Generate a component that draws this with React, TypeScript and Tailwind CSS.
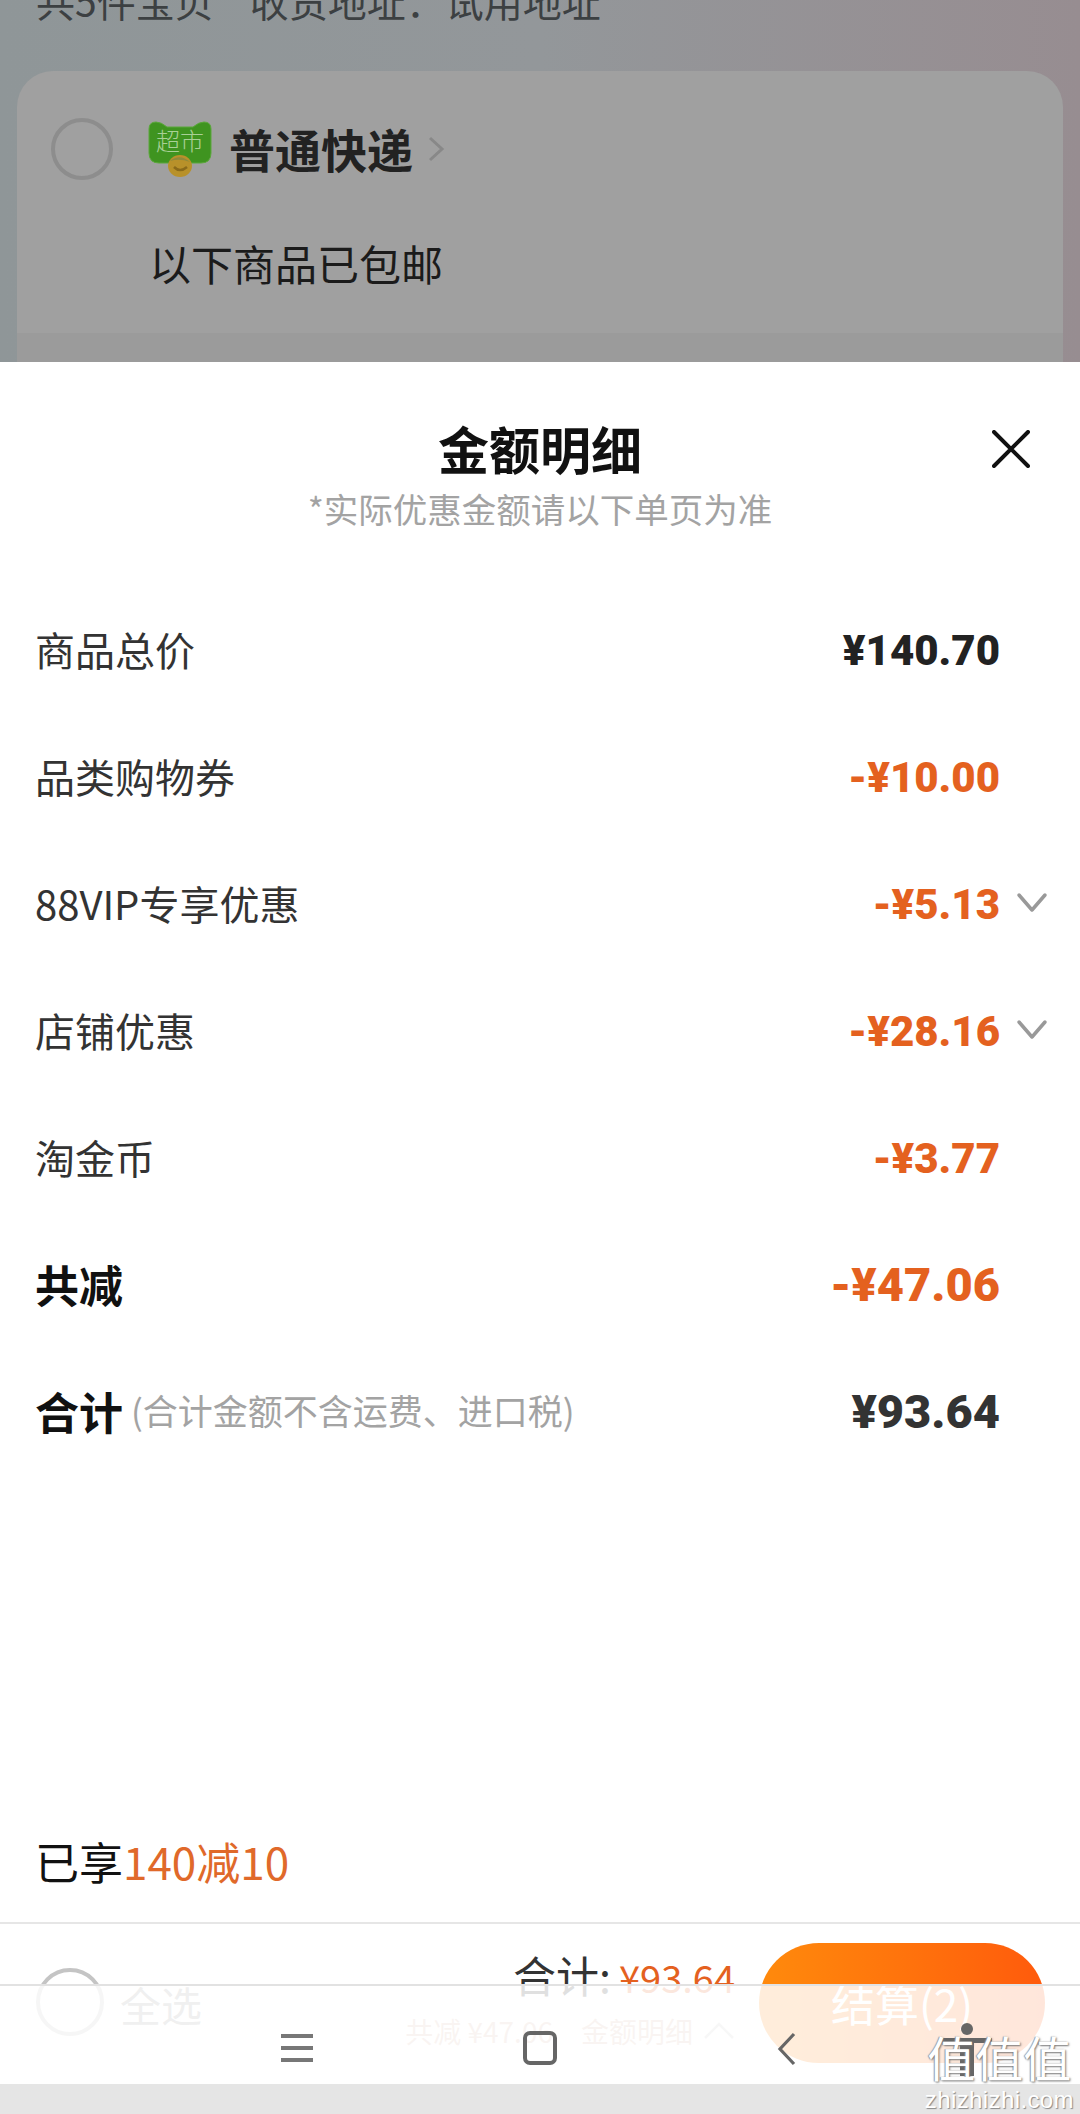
const sans = "font-['Noto_Sans_CJK_SC','Noto_Sans',sans-serif]";

function Row({ label, value, orange, chevron, bold }: { label: React.ReactNode; value: string; orange?: boolean; chevron?: boolean; bold?: boolean }) {
  return (
    <div className="flex items-center h-[127px] pl-[35px]">
      <div className={bold ? "flex-1 text-[44px] font-bold text-[#111]" : "flex-1 text-[40px] text-[#333]"}>{label}</div>
      <div className={"pt-[3px] font-['Roboto'] font-black text-right " + (bold ? "text-[47px] " : "text-[42px] ") + (orange ? "text-[#e4611f]" : bold ? "text-[#333]" : "text-[#222]")}>{value}</div>
      <div className="w-[80px] pl-[16px] flex">
        {chevron && (
          <svg width="32" height="22" viewBox="0 0 32 22" fill="none" stroke="#999" strokeWidth="3.5" strokeLinecap="round" strokeLinejoin="round">
            <path d="M3 3 L16 18 L29 3" />
          </svg>
        )}
      </div>
    </div>
  );
}

function Logo() {
  return (
    <svg width="66" height="58" viewBox="0 0 66 58" className="shrink-0">
      <path d="M2 9 Q2 2 9 2 Q14 2 20 7 H46 Q52 2 57 2 Q64 2 64 9 V33 Q64 43 54 43 H12 Q2 43 2 33 Z" fill="#3f9420" stroke="#5aa83a" strokeWidth="1" />
      <text x="33" y="30" textAnchor="middle" fontSize="24" fill="#a9d096" fontFamily="'Noto Sans CJK SC'" fontWeight="300">超市</text>
      <ellipse cx="33" cy="46" rx="12" ry="11" fill="#b8912a" />
      <path d="M23 41 Q33 33 43 42 Q33 38 23 41 Z" fill="#8f8a3a" />
      <path d="M27 47 Q33 53 40 47" fill="none" stroke="#8a6a1a" strokeWidth="2.5" />
    </svg>
  );
}

export default function App() {
  return (
    <div className={"relative w-[1080px] h-[2114px] overflow-hidden bg-white " + sans}>
      {/* dimmed page behind the sheet */}
      <div className="h-[362px] overflow-hidden bg-gradient-to-r from-[#8f9698] via-[#93979a] to-[#978d91] px-[17px]">
        <div className="h-[71px] pl-[19px] -mt-[20px] flex gap-[36px] text-[39px] leading-[40px] text-[#3c4042] whitespace-pre">
          <span>共5件宝贝</span>
          <span>收货地址：试用地址</span>
        </div>
        <div className="mt-[20px] h-[320px] rounded-t-[36px] bg-[#a0a0a0]">
          <div className="flex items-center h-[150px] pt-[5px] pl-[34px]">
            <div className="w-[62px] h-[62px] rounded-full border-[4px] border-[#8d8d8d]" />
            <div className="ml-[34px]"><Logo /></div>
            <div className="ml-[16px] text-[46px] font-bold text-[#222]">普通快递</div>
            <svg width="18" height="28" viewBox="0 0 18 28" fill="none" stroke="#888" strokeWidth="3" className="ml-[14px]"><path d="M3 3 L15 14 L3 25" /></svg>
          </div>
          <div className="pl-[132px] h-[112px] text-[42px] leading-[50px] pt-[17px] text-[#1b1b1b]">以下商品已包邮</div>
          <div className="h-[40px] bg-[#9b9b9b]" />
        </div>
      </div>

      {/* sheet */}
      <div className="relative h-[1560px] bg-white">
        <div className="relative pt-[56px] text-center">
          <div className="text-[51px] leading-[60px] font-bold text-[#111]">金额明细</div>
          <div className="mt-[8px] text-[34.5px] leading-[44px] text-[#a3a3a3]">*实际优惠金额请以下单页为准</div>
          <svg width="38" height="38" viewBox="0 0 38 38" className="absolute right-[50px] top-[68px]" fill="none" stroke="#111" strokeWidth="4" strokeLinecap="round"><path d="M2 2 L36 36 M36 2 L2 36" /></svg>
        </div>
        <div className="mt-[55px]">
          <Row label="商品总价" value="¥140.70" />
          <Row label="品类购物券" value="-¥10.00" orange />
          <Row label="88VIP专享优惠" value="-¥5.13" orange chevron />
          <Row label="店铺优惠" value="-¥28.16" orange chevron />
          <Row label="淘金币" value="-¥3.77" orange />
          <Row label="共减" value="-¥47.06" orange bold />
          <Row
            bold
            label={<span className="flex items-center">合计<span className="ml-[8px] text-[35px] font-normal text-[#a3a3a3]">(合计金额不含运费、进口税)</span></span>}
            value="¥93.64"
          />
        </div>
        <div className="mt-[362px] pl-[35px] text-[44px] leading-[50px] text-[#111]">已享<span className="text-[#e0692a]">140减10</span></div>
      </div>

      {/* bottom bar */}
      <div className="absolute left-0 right-0 top-[1922px] h-[162px] border-t-2 border-[#e6e6e6] bg-white flex items-start">
        <div className="ml-[36px] mt-[44px] w-[68px] h-[68px] rounded-full border-[4px] border-[#c4c4c4]" />
        <div className="ml-[16px] mt-[54px] text-[41px] leading-[52px] text-[#999]">全选</div>
        <div className="flex-1 flex flex-col items-end pr-[24px] pt-[20px]">
          <div className="flex items-baseline text-[43px] leading-[60px] text-[#333]">合计:<span className="ml-[8px] text-[38px] text-[#e4611f]">¥93.64</span></div>
          <div className="mt-[4px] text-[28px] leading-[40px] text-[#d8b8a8] flex items-center">共减 ¥47.06<span className="ml-[28px]">金额明细</span><svg width="32" height="18" viewBox="0 0 32 18" fill="none" stroke="#ccc" strokeWidth="2.5" className="ml-[10px]"><path d="M2 16 L16 2 L30 16" /></svg></div>
        </div>
        <div className="mr-[35px] mt-[19px] w-[286px] h-[120px] rounded-[60px] bg-gradient-to-r from-[#ff8a0c] to-[#ff5a0c] flex items-center justify-center text-[44px] text-white">结算(2)</div>
      </div>

      {/* translucent system navigation bar */}
      <div className="absolute left-0 right-0 top-[1984px] h-[100px] border-t-2 border-[#e2e2e2] bg-white/85">
        <svg width="32" height="30" viewBox="0 0 32 30" className="absolute left-[281px] top-[47px]" fill="#777"><rect width="32" height="4" y="1" /><rect width="32" height="4" y="13" /><rect width="32" height="4" y="25" /></svg>
        <svg width="34" height="34" viewBox="0 0 34 34" className="absolute left-[523px] top-[45px]" fill="none" stroke="#666" strokeWidth="4"><rect x="2" y="2" width="30" height="30" rx="5" /></svg>
        <svg width="20" height="34" viewBox="0 0 20 34" className="absolute left-[777px] top-[46px]" fill="none" stroke="#666" strokeWidth="3.2"><path d="M17 2 L3 17 L17 32" /></svg>
        <svg width="50" height="56" viewBox="0 0 50 56" className="absolute left-[942px] top-[36px]" fill="#666"><circle cx="25" cy="7" r="6" /><path d="M0 16 H50 V21 H32 V54 H18 V21 H0 Z" /></svg>
      </div>

      {/* grey strip */}
      <div className="absolute left-0 right-0 bottom-0 h-[30px] bg-[#e5e5e5]" />

      {/* watermark */}
      <div className="absolute right-[6px] top-[2026px] flex flex-col items-center text-white">
        <div className="text-[48px] leading-[60px] text-white [text-shadow:1px_1px_2px_#777,-1px_0_1px_#999]">值值值</div>
        <div className="mt-[2px] font-['Liberation_Sans'] text-[24px] leading-[24px] tracking-[0.4px] text-white [text-shadow:1px_1px_1px_#888]">zhizhizhi.com</div>
      </div>
    </div>
  );
}
